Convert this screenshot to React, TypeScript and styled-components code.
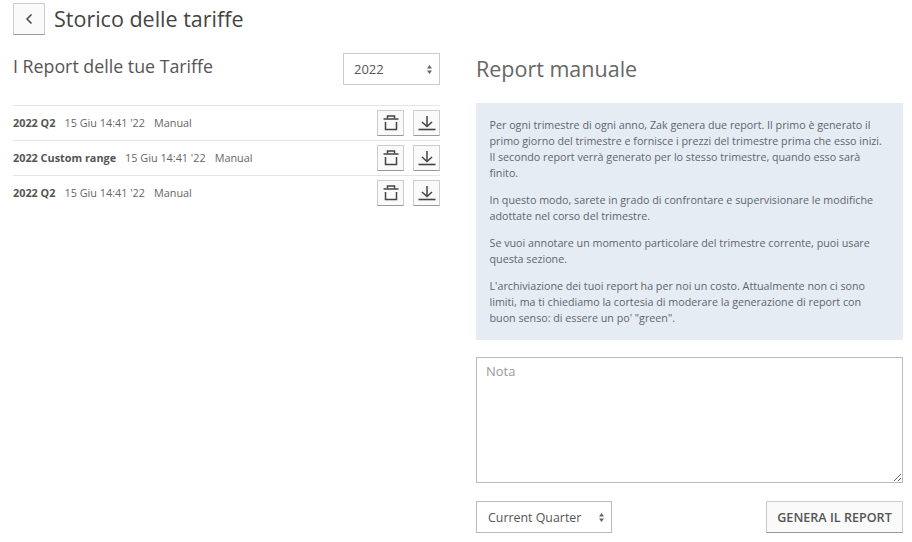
import React from 'react';
import styled, { createGlobalStyle } from 'styled-components';

const GlobalStyle = createGlobalStyle`
  html, body {
    margin: 0;
    padding: 0;
    background: #fff;
    font-family: 'Open Sans', sans-serif;
    color: #555;
  }
  * {
    box-sizing: border-box;
  }
`;

const reports = [
  { name: '2022 Q2', date: "15 Giu 14:41 '22", type: 'Manual' },
  { name: '2022 Custom range', date: "15 Giu 14:41 '22", type: 'Manual' },
  { name: '2022 Q2', date: "15 Giu 14:41 '22", type: 'Manual' },
];

const ChevronLeft = () => (
  <svg width="12" height="12" viewBox="0 0 12 12" fill="none" stroke="#444" strokeWidth="1.5">
    <path d="M8.5 1.5 L4 6 L8.5 10.5" />
  </svg>
);

const TrashIcon = () => (
  <svg width="16" height="16" viewBox="0 0 16 16" fill="none" stroke="#444" strokeWidth="1.5">
    <path d="M0.5 4 H15.5" />
    <path d="M4.5 3.5 V1 H11.5 V3.5" />
    <path d="M2.5 7 V14.5 H13.5 V7" />
  </svg>
);

const DownloadIcon = () => (
  <svg width="18" height="16" viewBox="0 0 18 16" fill="none" stroke="#444" strokeWidth="1.5">
    <path d="M9 1 V11" />
    <path d="M4 7 L9 11.5 L14 7" />
    <path d="M0.5 14.5 H17.5" strokeWidth="1.6" />
  </svg>
);

const App = () => {
  return (
    <Page>
      <GlobalStyle />
      <Header>
        <BackButton type="button">
          <ChevronLeft />
        </BackButton>
        <Title>Storico delle tariffe</Title>
      </Header>
      <Columns>
        <LeftColumn>
          <LeftHead>
            <ListTitle>I Report delle tue Tariffe</ListTitle>
            <YearSelect defaultValue="2022">
              <option>2022</option>
              <option>2021</option>
            </YearSelect>
          </LeftHead>
          <ReportList>
            {reports.map((report, i) => (
              <ReportRow key={i}>
                <ReportName>{report.name}</ReportName>
                <ReportMeta>{report.date}</ReportMeta>
                <ReportMeta>{report.type}</ReportMeta>
                <RowActions>
                  <IconButton type="button" aria-label="Elimina">
                    <TrashIcon />
                  </IconButton>
                  <IconButton type="button" aria-label="Scarica">
                    <DownloadIcon />
                  </IconButton>
                </RowActions>
              </ReportRow>
            ))}
          </ReportList>
        </LeftColumn>
        <RightColumn>
          <ManualTitle>Report manuale</ManualTitle>
          <InfoBox>
            <p>
              Per ogni trimestre di ogni anno, Zak genera due report. Il primo è generato il
              primo giorno del trimestre e fornisce i prezzi del trimestre prima che esso inizi.
              Il secondo report verrà generato per lo stesso trimestre, quando esso sarà
              finito.
            </p>
            <p>
              In questo modo, sarete in grado di confrontare e supervisionare le modifiche
              adottate nel corso del trimestre.
            </p>
            <p>Se vuoi annotare un momento particolare del trimestre corrente, puoi usare questa sezione.</p>
            <p>
              L'archiviazione dei tuoi report ha per noi un costo. Attualmente non ci sono
              limiti, ma ti chiediamo la cortesia di moderare la generazione di report con
              buon senso: di essere un po' "green".
            </p>
          </InfoBox>
          <NoteArea placeholder="Nota" />
          <FormFooter>
            <RangeSelect defaultValue="Current Quarter">
              <option>Current Quarter</option>
              <option>Custom range</option>
            </RangeSelect>
            <GenerateButton type="button">GENERA IL REPORT</GenerateButton>
          </FormFooter>
        </RightColumn>
      </Columns>
    </Page>
  );
};

export default App;

const Page = styled.div`
  width: 912px;
  height: 542px;
  overflow: hidden;
  padding: 3px 9px 0 13px;
`;

const Header = styled.div`
  display: flex;
  align-items: center;
  height: 32px;
`;

const BackButton = styled.button`
  width: 32px;
  height: 32px;
  padding: 0;
  display: flex;
  align-items: center;
  justify-content: center;
  background: #fafafa;
  border: 1px solid #ccc;
  border-bottom-color: #999;
  border-radius: 1px;
`;

const Title = styled.h1`
  margin: 0 0 2px 9px;
  font-size: 21.5px;
  font-weight: 400;
  color: #444;
`;

const Columns = styled.div`
  display: flex;
  justify-content: space-between;
  margin-top: 18px;
`;

const LeftColumn = styled.div`
  width: 427px;
`;

const LeftHead = styled.div`
  display: flex;
  justify-content: space-between;
  align-items: flex-start;
  height: 52px;
`;

const ListTitle = styled.h2`
  margin: 2px 0 0;
  font-size: 17.8px;
  line-height: 23px;
  font-weight: 400;
  color: #555;
`;

const selectArrows =
  "url(\"data:image/svg+xml;utf8,<svg xmlns='http://www.w3.org/2000/svg' width='5' height='9'><path d='M2.5 0 L5 3.5 H0 Z M2.5 9 L0 5.5 H5 Z' fill='%23666'/></svg>\")";

const YearSelect = styled.select`
  appearance: none;
  width: 97px;
  height: 32px;
  padding: 0 10px;
  font-family: inherit;
  font-size: 13px;
  color: #555;
  background: #fff ${selectArrows} no-repeat right 7px center;
  border: 1px solid #ccc;
  border-radius: 0;
`;

const ReportList = styled.div`
  display: flex;
  flex-direction: column;
`;

const ReportRow = styled.div`
  display: flex;
  align-items: center;
  gap: 9px;
  height: 35px;
  border-top: 1px solid #e4e4e4;
  font-size: 10.85px;
`;

const ReportName = styled.span`
  font-weight: 700;
  color: #555;
  margin-bottom: 2px;
`;

const ReportMeta = styled.span`
  color: #666;
  margin-bottom: 2px;
`;

const RowActions = styled.div`
  display: flex;
  gap: 9px;
  margin-left: auto;
`;

const IconButton = styled.button`
  width: 27px;
  height: 26px;
  padding: 0;
  display: flex;
  align-items: center;
  justify-content: center;
  background: #fafafa;
  border: 1px solid #ccc;
  border-bottom-color: #999;
  border-radius: 1px;
`;

const RightColumn = styled.div`
  width: 427px;
`;

const ManualTitle = styled.h2`
  margin: 1px 0 0;
  font-size: 21.5px;
  line-height: 29px;
  font-weight: 400;
  color: #666;
`;

const InfoBox = styled.div`
  margin-top: 20px;
  height: 237px;
  padding: 14px 18px 0 13.5px;
  background: #e6ecf4;
  font-size: 10.72px;
  line-height: 16px;
  color: #5f656d;

  p {
    margin: 0 0 11px;
  }
`;

const NoteArea = styled.textarea`
  display: block;
  width: 100%;
  height: 126px;
  margin-top: 17px;
  padding: 4px 9px;
  font-family: inherit;
  font-size: 13px;
  border: 1px solid #bbb;
  border-radius: 0;
  outline: none;

  &::placeholder {
    color: #999;
  }
`;

const FormFooter = styled.div`
  display: flex;
  justify-content: space-between;
  margin-top: 18px;
`;

const RangeSelect = styled.select`
  appearance: none;
  width: 136px;
  height: 32px;
  padding: 0 11px;
  font-family: inherit;
  font-size: 12.4px;
  color: #555;
  background: #fff ${selectArrows} no-repeat right 7px center;
  border: 1px solid #bbb;
  border-radius: 0;
`;

const GenerateButton = styled.button`
  width: 137px;
  height: 32px;
  padding: 0;
  font-family: inherit;
  font-size: 12.6px;
  font-weight: 600;
  color: #555;
  background: #fafafa;
  border: 1px solid #ccc;
  border-bottom-color: #999;
  border-radius: 1px;
`;
